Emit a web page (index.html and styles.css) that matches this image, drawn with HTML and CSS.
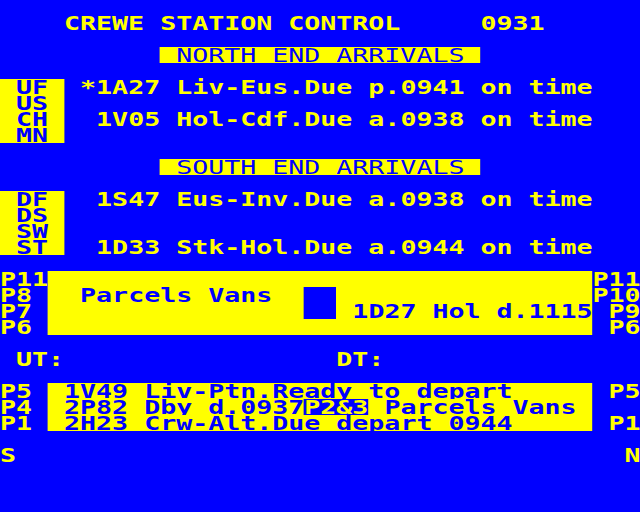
FILE: index.html
```html
<!DOCTYPE html>
<html>
<head>
<meta charset="utf-8">
<title>Crewe Station Control</title>
<link rel="stylesheet" href="styles.css">
</head>
<body>
<div class="screen">
<div class="row"></div>
<div class="row">    CREWE STATION CONTROL     0931</div>
<div class="row"></div>
<div class="row">          <span class="bar"> NORTH END ARRIVALS </span></div>
<div class="row"></div>
<div class="row"><span class="inv"> UF </span> *1A27 Liv-Eus.Due p.0941 on time</div>
<div class="row"><span class="inv"> US </span></div>
<div class="row"><span class="inv"> CH </span>  1V05 Hol-Cdf.Due a.0938 on time</div>
<div class="row"><span class="inv"> MN </span></div>
<div class="row"></div>
<div class="row">          <span class="bar"> SOUTH END ARRIVALS </span></div>
<div class="row"></div>
<div class="row"><span class="inv"> DF </span>  1S47 Eus-Inv.Due a.0938 on time</div>
<div class="row"><span class="inv"> DS </span></div>
<div class="row"><span class="inv"> SW </span></div>
<div class="row"><span class="inv"> ST </span>  1D33 Stk-Hol.Due a.0944 on time</div>
<div class="row"></div>
<div class="row">P11<span class="inv">                                  </span>P11</div>
<div class="row">P8 <span class="inv">  Parcels Vans  </span><span class="hole">  </span><span class="inv">                </span>P10</div>
<div class="row">P7 <span class="inv">                </span><span class="hole">  </span><span class="inv"> 1D27 Hol d.1115</span> P9</div>
<div class="row">P6 <span class="inv">                                  </span> P6</div>
<div class="row"></div>
<div class="row"> UT:                 DT:</div>
<div class="row"></div>
<div class="row">P5 <span class="inv"> 1V49 Liv-Ptn.Ready to depart     </span> P5</div>
<div class="row">P4 <span class="inv"> 2P82 Dby d.0937</span><span class="hole">P2&amp;3</span><span class="inv"> Parcels Vans </span></div>
<div class="row">P1 <span class="inv"> 2H23 Crw-Alt.Due depart 0944     </span> P1</div>
<div class="row"></div>
<div class="row">S                                      N</div>
<div class="row"></div>
<div class="row"></div>
<div class="row"></div>
</div>
</body>
</html>
```
FILE: styles.css
```css
html, body {
  margin: 0;
  padding: 0;
  background: #0000ff;
}
body {
  width: 640px;
  height: 512px;
  overflow: hidden;
}
.screen {
  width: 40ch;
  font-family: "DejaVu Sans Mono", monospace;
  font-size: 19px;
  font-weight: bold;
  line-height: 16px;
  color: #ffff00;
  transform: scaleX(1.4);
  transform-origin: 0 0;
}
.row {
  height: 16px;
  white-space: pre;
  position: relative;
  top: -1px;
}
.inv, .bar, .hole {
  display: inline-block;
  height: 16px;
  vertical-align: top;
  line-height: 16px;
}
.inv {
  background: #ffff00;
  color: #0000ff;
}
.bar {
  background: #ffff00;
  color: #0000ff;
  font-weight: normal;
}
.hole {
  background: #0000ff;
  color: #ffff00;
}
```
